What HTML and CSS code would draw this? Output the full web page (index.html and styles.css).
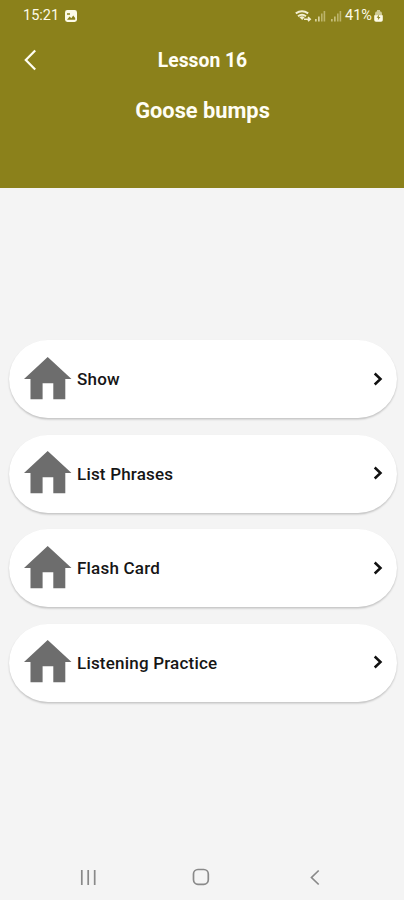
FILE: index.html
```html
<!DOCTYPE html>
<html lang="en">
<head>
<meta charset="utf-8">
<title>Lesson 16</title>
<link rel="stylesheet" href="styles.css">
</head>
<body>
<svg class="defs" width="0" height="0" aria-hidden="true">
  <symbol id="house" viewBox="0 0 48 43"><path d="M23.7 0 47.5 22H41.3V42.3H29.3V26.3H18.6V42.3H6.5V22H0Z"/></symbol>
  <symbol id="chevron" viewBox="0 0 10 14"><path d="M1.7 1.5 7.5 7 1.7 12.5"/></symbol>
</svg>
<header class="header">
  <div class="status">
    <span class="time">15:21</span>
    <svg class="picture" width="12" height="12" viewBox="0 0 12 12"><rect width="12" height="12" rx="2.4" fill="#fdfbe8"/><path d="M2 9.8 4.6 6.6 6.3 8.3 8.2 5.4 10.2 8V9.8ZM2 3.2H5V4.7H2Z" fill="#8b811b"/></svg>
    <svg class="signals" width="48" height="14" viewBox="0 0 48 14">
      <g fill="none" stroke="#f3efcf" stroke-width="2"><path d="M.8 4.4Q7 .2 13.2 4.4M3 7.2Q7 4.2 11 7.2"/></g>
      <path d="M4.4 8.2Q7 6.4 9.6 8.2L7.2 11Z" fill="#f3efcf"/>
      <path d="M9 10.2H15M13 8.2 15.2 10.2 13 12.2" fill="none" stroke="#f3efcf" stroke-width="1.6"/>
      <g fill="#d8d29b"><path d="M20 10h1.7v2.5H20zM23 7.5h1.7v5H23z"/><path d="M36 10h1.7v2.5H36zM39 7.5h1.7v5H39z" opacity=".75"/></g>
      <g fill="#bcb46b"><path d="M26 4.5h1.6v8H26zM28.6 2h1.6v10.5h-1.6zM42 4.5h1.6v8H42zM44.6 2h1.6v10.5h-1.6z"/></g>
    </svg>
    <span class="percent">41%</span>
    <svg class="battery" width="9" height="12" viewBox="0 0 9 12"><path d="M3 0H6V1.5H7Q8 2 8 4V6H1V4Q1 2 2 1.5H3Z" fill="#fdfbe8" opacity=".6"/><path d="M.2 5.3H8.8V10Q8.8 11.8 7 11.8H2Q.2 11.8.2 10Z" fill="#fdfbe8"/><path d="M5.2 4.5 2.6 7.8H4.3L3.8 10.2 6.4 7H4.7Z" fill="#8b811b"/></svg>
  </div>
  <div class="toolbar">
    <svg class="back" width="13" height="22" viewBox="0 0 13 22"><path d="M11.2 1.5 1.8 11 11.2 20.5"/></svg>
    <h1 class="title">Lesson 16</h1>
  </div>
  <h2 class="subtitle">Goose bumps</h2>
</header>
<main class="menu">
  <a class="card"><svg class="house"><use href="#house"/></svg><span class="label">Show</span><svg class="chevron"><use href="#chevron"/></svg></a>
  <a class="card"><svg class="house"><use href="#house"/></svg><span class="label">List Phrases</span><svg class="chevron"><use href="#chevron"/></svg></a>
  <a class="card"><svg class="house"><use href="#house"/></svg><span class="label">Flash Card</span><svg class="chevron"><use href="#chevron"/></svg></a>
  <a class="card"><svg class="house"><use href="#house"/></svg><span class="label">Listening Practice</span><svg class="chevron"><use href="#chevron"/></svg></a>
</main>
<nav class="nav">
  <svg width="16" height="17" viewBox="0 0 16 17"><path d="M1.8 1V16M8.2 1V16M14.7 1V16"/></svg>
  <svg class="home" width="18" height="18" viewBox="0 0 18 18"><rect x="1.5" y="1.5" width="14.8" height="14.8" rx="4.5"/></svg>
  <svg width="10" height="17" viewBox="0 0 10 17"><path d="M8.7 1.5 1.5 8.5 8.7 15.5"/></svg>
</nav>
</body>
</html>
```
FILE: styles.css
```css
* { box-sizing: border-box; }
body {
  margin: 0;
  height: 900px;
  display: flex;
  flex-direction: column;
  background: #f4f4f4;
  font-family: Roboto, "Liberation Sans", sans-serif;
  overflow: hidden;
}
svg { display: block; flex: none; }
.defs { position: absolute; }
.header {
  height: 188px;
  flex: none;
  background: #8b811b;
  color: #fffef4;
}
.status {
  height: 31px;
  padding: 0 21px 0 23px;
  display: flex;
  align-items: center;
  font-size: 14.5px;
  color: #fdfbe8;
}
.time { width: 42px; }
.signals { margin-left: auto; }
.percent { margin-left: 2px; width: 29px; }
.toolbar {
  height: 58px;
  padding: 0 24px;
  display: grid;
  grid-template-columns: 13px 1fr 13px;
  align-items: center;
}
.back path { fill: none; stroke: #fffef4; stroke-width: 2.2; }
.title {
  margin: 0;
  padding-left: 1px;
  font-size: 19.3px;
  font-weight: 700;
  text-align: center;
}
.subtitle {
  margin: 8px 0 0;
  padding-left: 1px;
  font-size: 21.8px;
  line-height: 28px;
  font-weight: 700;
  text-align: center;
}
.menu {
  margin-top: 152px;
  padding: 0 7px 0 9px;
  display: flex;
  flex-direction: column;
  gap: 16.5px;
}
.card {
  height: 78px;
  padding: 0 14px 0 15px;
  display: flex;
  align-items: center;
  border-radius: 39px;
  background: #fff;
  box-shadow: 0 1.5px 2px rgba(0, 0, 0, .2);
}
.house { width: 48px; height: 43px; margin-bottom: 2px; fill: #6d6d6d; }
.label {
  flex: 1;
  margin-left: 5px;
  font-size: 17px;
  letter-spacing: .2px;
  font-weight: 500;
  color: #161616;
}
.chevron { width: 10px; height: 14px; margin-bottom: 1px; fill: none; stroke: #111; stroke-width: 2.5; }
.nav {
  margin-top: auto;
  height: 46px;
  padding: 0 84px 0 80px;
  display: flex;
  align-items: center;
  justify-content: space-between;
}
.nav svg { fill: none; stroke: #898989; stroke-width: 1.7; }
.nav .home { margin-right: 4px; }
```
